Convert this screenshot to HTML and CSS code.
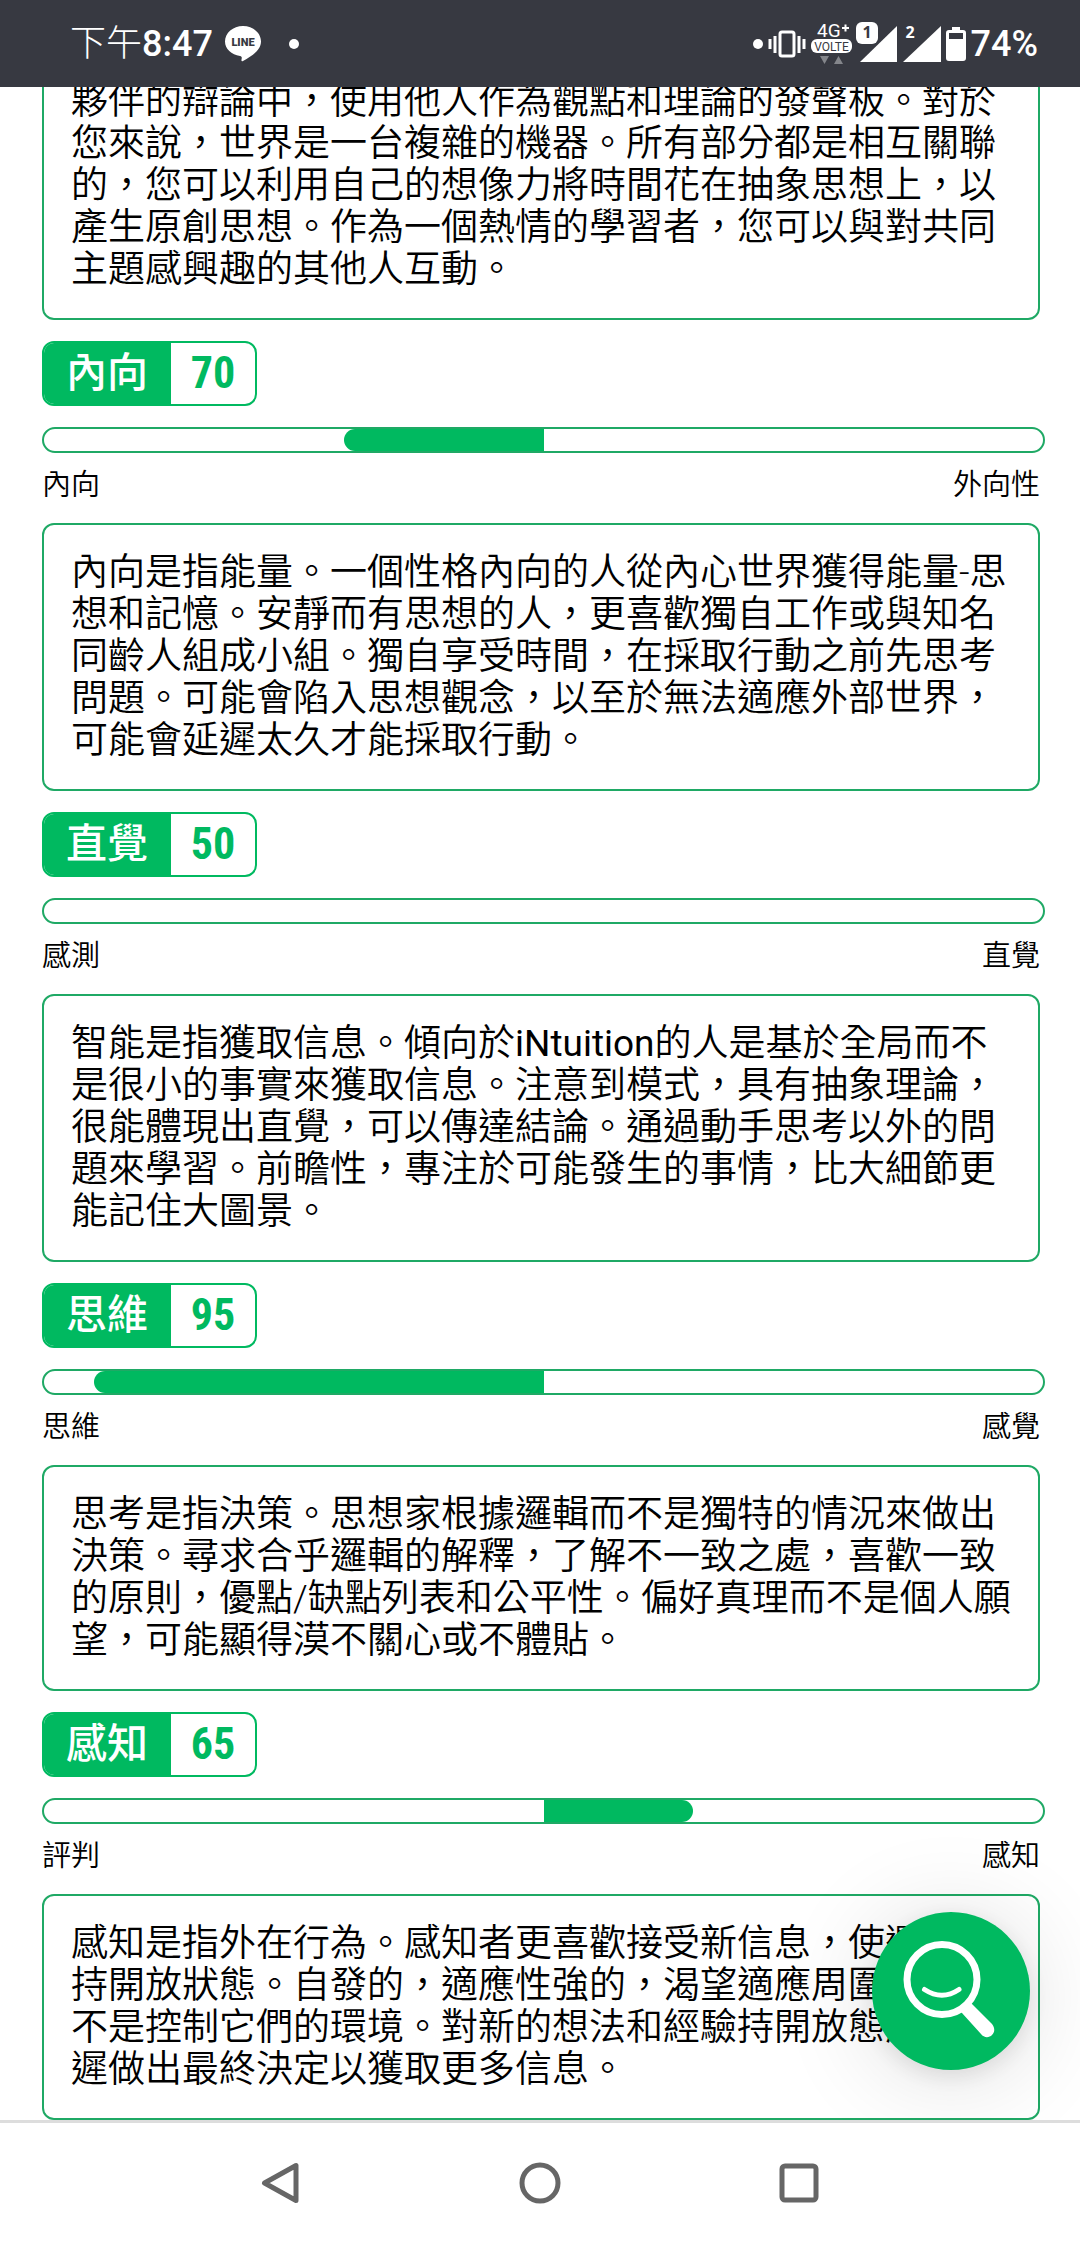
FILE: index.html
```html
<!DOCTYPE html>
<html lang="zh-Hant">
<head>
<meta charset="utf-8">
<meta name="viewport" content="width=device-width, initial-scale=1">
<title>性格測試結果</title>
<link rel="stylesheet" href="styles.css">
</head>
<body>
<header class="status">
  <div class="status-side">
    <span class="clock"><span class="clock-period">下午</span>8:47</span>
    <svg class="line-logo" width="36" height="36" viewBox="0 0 36 36" aria-label="LINE">
      <path d="M18 0C8 0 0 7 0 15.500C0 23 6.500 28.500 15 30C17 30.500 17 31.500 16.500 33.500C16.300 35 16.600 35.800 18 35C25 31 36 25 36 15.500C36 7 28 0 18 0Z" fill="#fff"/>
      <text x="18" y="20" text-anchor="middle" class="line-text">LINE</text>
    </svg>
    <span class="dot"></span>
  </div>
  <div class="status-side status-right">
    <span class="dot"></span>
    <svg width="38" height="28" viewBox="0 0 38 28" aria-hidden="true">
      <rect x="12" y="2" width="14" height="24" rx="2" fill="none" stroke="#fff" stroke-width="3"/>
      <path d="M2 9v10M7 6v17M31 6v17M36 9v10" stroke="#fff" stroke-width="3"/>
    </svg>
    <svg class="network" width="42" height="44" viewBox="0 0 42 44" aria-hidden="true">
      <text x="6" y="15" class="net-text">4G</text>
      <path d="M31 6h7M34.500 2.500v7" stroke="#fff" stroke-width="2"/>
      <rect x="0" y="17" width="41" height="14" rx="6" fill="#fff"/>
      <text x="20.500" y="28.500" text-anchor="middle" class="volte-text">VOLTE</text>
      <path d="M9 34h9l-4.500 8zM23 42h9l-4.500-8z" fill="#84868b"/>
    </svg>
    <svg width="42" height="44" viewBox="0 0 42 44" aria-hidden="true">
      <path d="M41 4v36H4z" fill="#fff"/>
      <rect x="0" y="0" width="22" height="22" rx="6" fill="#fff"/>
      <text x="11" y="16" text-anchor="middle" class="sim-text sim-dark">1</text>
    </svg>
    <svg width="38" height="44" viewBox="0 0 38 44" aria-hidden="true">
      <path d="M38 4v36H0z" fill="#fff"/>
      <text x="7" y="16" text-anchor="middle" class="sim-text">2</text>
    </svg>
    <svg width="20" height="34" viewBox="0 0 20 34" aria-hidden="true">
      <path fill-rule="evenodd" d="M6 0h8v3h3q3 0 3 3v25q0 3-3 3H3q-3 0-3-3V6q0-3 3-3h3zM3 6v6h14V6z" fill="#fff"/>
    </svg>
    <span class="clock">74%</span>
  </div>
</header>

<main class="scroll">
  <div class="results">
    <p class="card">夥伴的辯論中，使用他人作為觀點和理論的發聲板。對於您來說，世界是一台複雜的機器。所有部分都是相互關聯的，您可以利用自己的想像力將時間花在抽象思想上，以產生原創思想。作為一個熱情的學習者，您可以與對共同主題感興趣的其他人互動。</p>

    <section class="trait">
      <h2 class="tag"><span class="tag-name">內向</span><span class="tag-score">70</span></h2>
      <div class="bar"><div class="fill fill-left" style="width:20%"></div></div>
      <div class="ends"><span>內向</span><span>外向性</span></div>
      <p class="card">內向是指能量。一個性格內向的人從內心世界獲得能量-思想和記憶。安靜而有思想的人，更喜歡獨自工作或與知名同齡人組成小組。獨自享受時間，在採取行動之前先思考問題。可能會陷入思想觀念，以至於無法適應外部世界，可能會延遲太久才能採取行動。</p>
    </section>

    <section class="trait">
      <h2 class="tag"><span class="tag-name">直覺</span><span class="tag-score">50</span></h2>
      <div class="bar"></div>
      <div class="ends"><span>感測</span><span>直覺</span></div>
      <p class="card">智能是指獲取信息。傾向於<span class="latin">iNtuition</span>的人是基於全局而不是很小的事實來獲取信息。注意到模式，具有抽象理論，很能體現出直覺，可以傳達結論。通過動手思考以外的問題來學習。前瞻性，專注於可能發生的事情，比大細節更能記住大圖景。</p>
    </section>

    <section class="trait">
      <h2 class="tag"><span class="tag-name">思維</span><span class="tag-score">95</span></h2>
      <div class="bar"><div class="fill fill-left" style="width:45%"></div></div>
      <div class="ends"><span>思維</span><span>感覺</span></div>
      <p class="card">思考是指決策。思想家根據邏輯而不是獨特的情況來做出決策。尋求合乎邏輯的解釋，了解不一致之處，喜歡一致的原則，優點/缺點列表和公平性。偏好真理而不是個人願望，可能顯得漠不關心或不體貼。</p>
    </section>

    <section class="trait">
      <h2 class="tag"><span class="tag-name">感知</span><span class="tag-score">65</span></h2>
      <div class="bar"><div class="fill fill-right" style="width:15%"></div></div>
      <div class="ends"><span>評判</span><span>感知</span></div>
      <p class="card">感知是指外在行為。感知者更喜歡接受新信息，使選項保持開放狀態。自發的，適應性強的，渴望適應周圍世界而不是控制它們的環境。對新的想法和經驗持開放態度，推遲做出最終決定以獲取更多信息。</p>
    </section>
  </div>
</main>

<button class="fab" type="button" aria-label="搜尋">
  <svg width="158" height="158" viewBox="0 0 158 158" aria-hidden="true">
    <g fill="none" stroke="#fff" stroke-linecap="round">
      <circle cx="70" cy="67.500" r="35" stroke-width="7"/>
      <path d="M52.500 77.500Q70 89 87 77.500" stroke-width="5"/>
    </g>
    <path d="M89 100L97 93L99 91L120 112C123 116 123 120 120 123C117 126 112 126 109 122L90 101Z" fill="#fff"/>
  </svg>
</button>

<nav class="sysnav">
  <button type="button" aria-label="返回"><svg width="44" height="44" viewBox="0 0 44 44"><path d="M37 4.500v35L5.500 22z" fill="none" stroke="#666" stroke-width="5" stroke-linejoin="round"/></svg></button>
  <button type="button" aria-label="主畫面"><svg width="44" height="44" viewBox="0 0 44 44"><circle cx="22" cy="22" r="18" fill="none" stroke="#666" stroke-width="5"/></svg></button>
  <button type="button" aria-label="最近使用"><svg width="44" height="44" viewBox="0 0 44 44"><rect x="5" y="5" width="34" height="34" rx="3" fill="none" stroke="#666" stroke-width="5"/></svg></button>
</nav>
</body>
</html>
```

FILE: styles.css
```css
* {
  box-sizing: border-box;
}

body {
  display: flex;
  flex-direction: column;
  height: 100vh;
  margin: 0;
  background: #fff;
  color: #000;
  font-family: Roboto, "Noto Sans CJK TC", sans-serif;
}

svg {
  display: block;
  overflow: visible;
}

/* Phone status bar */
.status {
  display: flex;
  flex: none;
  justify-content: space-between;
  align-items: center;
  height: 87px;
  padding: 0 42px 0 70px;
  background: #373941;
  color: #fff;
}

.status-side {
  display: flex;
  align-items: center;
  gap: 12px;
}

.status-right {
  gap: 5px;
}

.clock {
  font-size: 36px;
  font-weight: 500;
  line-height: 44px;
}

.clock-period {
  font-weight: 300;
}

.dot {
  width: 10px;
  height: 10px;
  border-radius: 50%;
  background: #fff;
}

.line-logo + .dot {
  margin-left: 16px;
}

.network {
  margin-right: -2px;
}

.line-text {
  fill: #373941;
  font-size: 11px;
  font-weight: 900;
}

.net-text {
  fill: #fff;
  font-size: 19px;
}

.volte-text {
  fill: #373941;
  font-size: 12px;
}

.sim-text {
  fill: #fff;
  font-family: "Noto Sans", sans-serif;
  font-size: 16px;
  font-weight: 700;
}

.sim-dark {
  fill: #373941;
}

/* Scrolled results, resting at the end of the list */
.scroll {
  display: flex;
  flex: 1;
  flex-direction: column;
  justify-content: flex-end;
  min-height: 0;
  overflow: hidden;
  padding: 0 40px 0 42px;
}

.results {
  display: flex;
  flex: none;
  flex-direction: column;
  gap: 21px;
}

.card {
  margin: 0;
  padding: 27px 24px 27px 27px;
  border: 2px solid #1fa965;
  border-radius: 12px;
  font-size: 37px;
  font-weight: 350;
  line-height: 42px;
}

.latin {
  font-weight: 400;
}

.trait {
  display: flex;
  flex-direction: column;
}

.tag {
  display: flex;
  align-self: flex-start;
  height: 65px;
  margin: 0 0 21px;
  overflow: hidden;
  border: 2px solid #00b960;
  border-radius: 12px;
  line-height: 60px;
}

.tag-name {
  padding: 0 23px 0 22px;
  background: #00b960;
  color: #fff;
  font-size: 41px;
  font-weight: 500;
}

.tag-score {
  width: 84px;
  color: #00b960;
  font-family: "Roboto Condensed", "Open Sans Condensed", "Noto Sans Condensed", Roboto, sans-serif;
  font-size: 44px;
  font-weight: 700;
  text-align: center;
}

.bar {
  height: 26px;
  margin-right: -5px;
  border: 2px solid #1fa965;
  border-radius: 13px;
}

.fill {
  height: 100%;
  background: #00b960;
}

.fill-left {
  margin-left: auto;
  margin-right: 50%;
  border-radius: 11px 0 0 11px;
}

.fill-right {
  margin-left: 50%;
  border-radius: 0 11px 11px 0;
}

.ends {
  display: flex;
  justify-content: space-between;
  margin: 15px 0 21px;
  font-size: 29px;
  font-weight: 350;
  line-height: 34px;
}

/* Floating search button */
.fab {
  position: fixed;
  right: 50px;
  bottom: 176px;
  width: 158px;
  height: 158px;
  padding: 0;
  border: 0;
  border-radius: 50%;
  background: #00b960;
  box-shadow: 0 6px 24px rgba(0, 0, 0, .1), 0 6px 100px rgba(0, 0, 0, .14);
}

/* System navigation */
.sysnav {
  position: relative;
  display: flex;
  flex: none;
  justify-content: center;
  height: 126px;
  padding-bottom: 3px;
  border-top: 3px solid #ddd;
  background: #fff;
}

.sysnav button {
  display: flex;
  justify-content: center;
  align-items: center;
  width: 24%;
  padding: 0;
  border: 0;
  background: none;
}
```
